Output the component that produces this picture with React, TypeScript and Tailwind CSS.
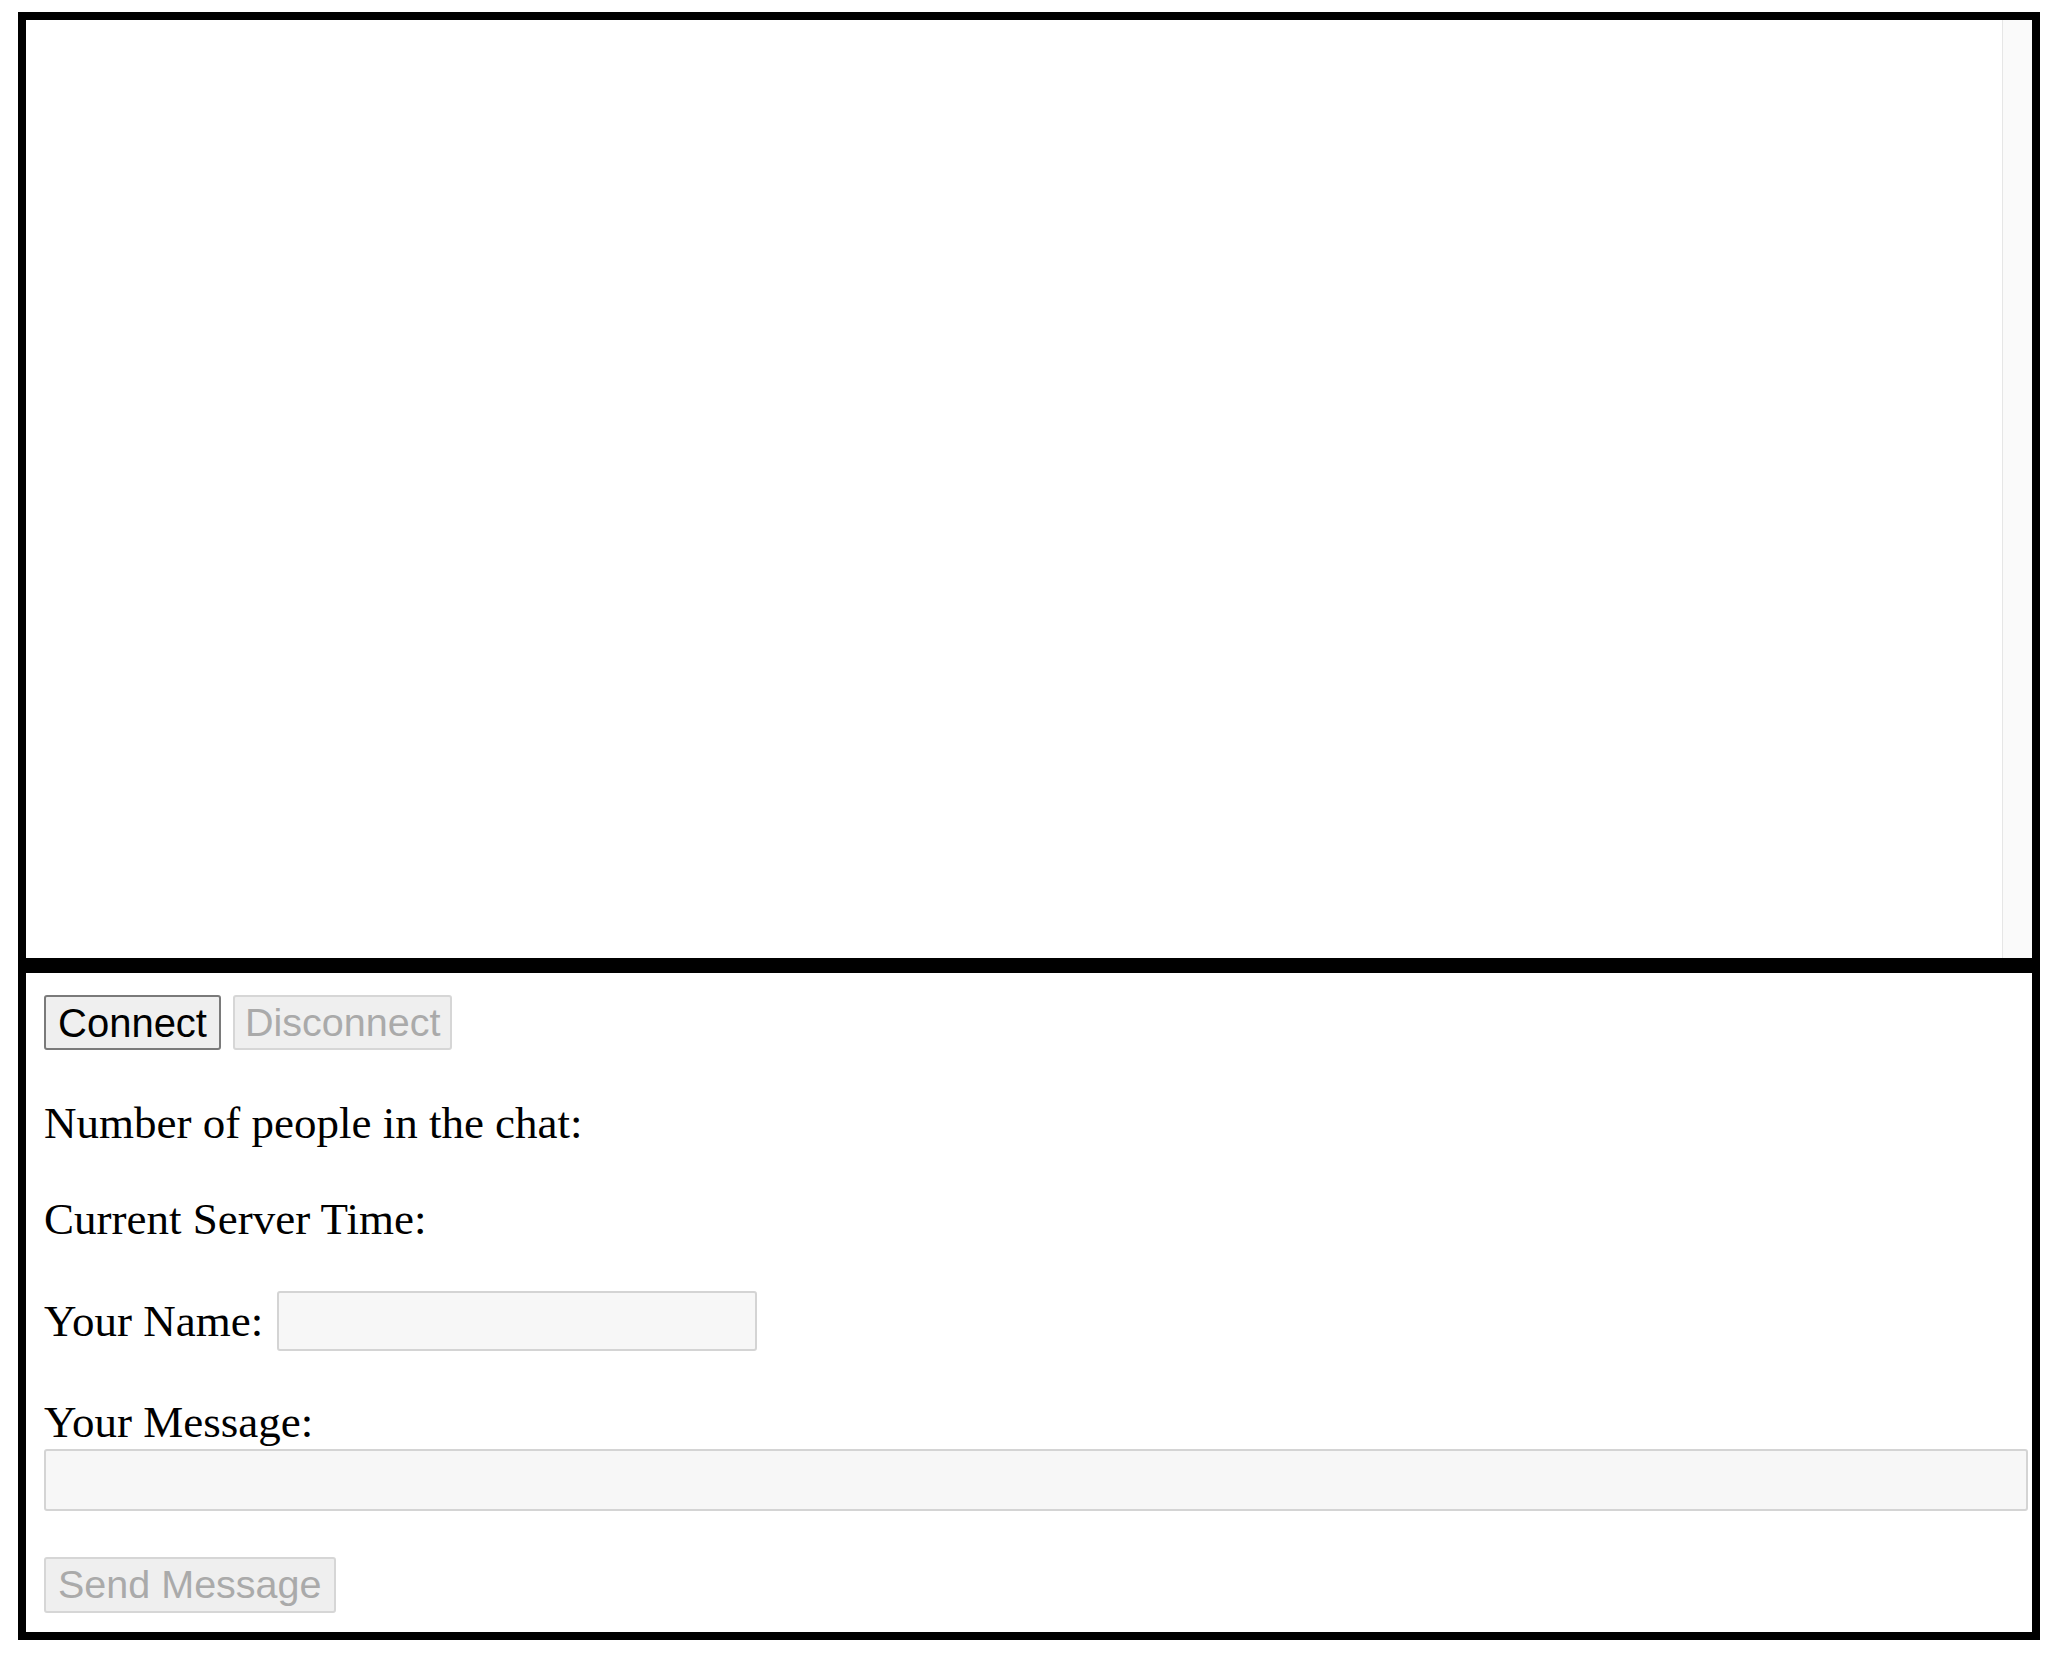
export default function App() {
  return (
    <div className="min-h-screen bg-white px-[18px] pt-[12px] font-['Liberation_Serif',serif] text-black">
      {/* ── Chat log panel ── */}
      <div className="flex h-[954px] border-[8px] border-black">
        <div className="flex-1" />
        <div className="w-[30px] border-l border-[#e6e6e6] bg-[#fafafa]" />
      </div>

      {/* ── Controls panel ── */}
      <div className="flex flex-col items-start border-[8px] border-t-[7px] border-black pb-[19px] pl-[18px] pr-[4px] pt-[22px]">
        <div className="flex items-center">
          <button className="flex h-[55px] items-center rounded-[3px] border-2 border-[#7a7a7a] bg-[#efefef] px-[12px] font-['Liberation_Sans',sans-serif] text-[40px] text-black">
            Connect
          </button>
          <button
            disabled
            className="ml-[12px] flex h-[55px] items-center rounded-[3px] border-2 border-[#d6d6d6] bg-[#efefef] px-[10px] font-['Liberation_Sans',sans-serif] text-[39.5px] text-[#aaaaaa]"
          >
            Disconnect
          </button>
        </div>

        <p className="mt-[47px] text-[45px] leading-[52px]">
          Number of people in the chat:
        </p>
        <p className="mt-[44px] text-[45px] leading-[52px]">
          Current Server Time:
        </p>

        <div className="mt-[46px] flex h-[60px] items-center">
          <span className="text-[45px] leading-[52px]">Your Name:</span>
          <input
            type="text"
            className="ml-[14px] h-[60px] w-[480px] rounded-[3px] border-2 border-[#d4d4d4] bg-[#f7f7f7] outline-none"
          />
        </div>

        <p className="mt-[45px] text-[45px] leading-[52px]">Your Message:</p>
        <input
          type="text"
          className="mt-[1px] h-[62px] w-full rounded-[3px] border-2 border-[#d4d4d4] bg-[#f7f7f7] outline-none"
        />

        <button
          disabled
          className="mt-[46px] flex h-[56px] items-center rounded-[3px] border-2 border-[#d6d6d6] bg-[#efefef] px-[12px] font-['Liberation_Sans',sans-serif] text-[39.5px] text-[#aaaaaa]"
        >
          Send Message
        </button>
      </div>
    </div>
  );
}
